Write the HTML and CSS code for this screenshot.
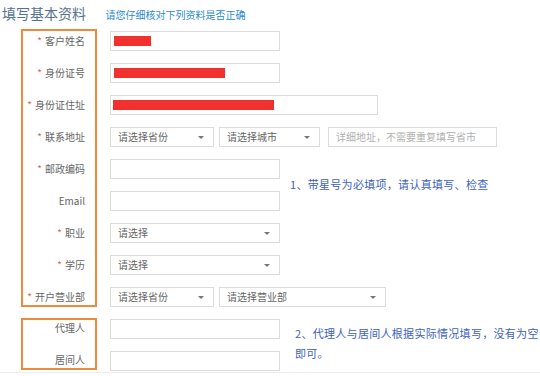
FILE: index.html
```html
<!DOCTYPE html>
<html>
<head>
    <title>填写基本资料</title>
    <link rel="stylesheet" href="styles.css">
</head>
<body>
    <div class="header">
        <span class="title">填写基本资料</span>
        <span class="subtitle">请您仔细核对下列资料是否正确</span>
    </div>

    <div class="form">
        <div class="labels">
            <div class="box box-main">
                <label class="lbl"><i>*</i>客户姓名</label>
                <label class="lbl"><i>*</i>身份证号</label>
                <label class="lbl"><i>*</i>身份证住址</label>
                <label class="lbl"><i>*</i>联系地址</label>
                <label class="lbl"><i>*</i>邮政编码</label>
                <label class="lbl">Email</label>
                <label class="lbl"><i>*</i>职业</label>
                <label class="lbl"><i>*</i>学历</label>
                <label class="lbl"><i>*</i>开户营业部</label>
            </div>
            <div class="box box-extra">
                <label class="lbl">代理人</label>
                <label class="lbl">居间人</label>
            </div>
        </div>

        <div class="fields">
            <div class="row">
                <div class="field w170"><span class="redact r1"></span></div>
            </div>
            <div class="row">
                <div class="field w170"><span class="redact r2"></span></div>
            </div>
            <div class="row">
                <div class="field w268"><span class="redact r3"></span></div>
            </div>
            <div class="row">
                <div class="field select w104">请选择省份</div>
                <div class="field select w101">请选择城市</div>
                <div class="field w169 placeholder">详细地址，不需要重复填写省市</div>
            </div>
            <div class="row">
                <div class="field w170"></div>
                <p class="note note-1">1、带星号为必填项，请认真填写、检查</p>
            </div>
            <div class="row">
                <div class="field w170"></div>
            </div>
            <div class="row">
                <div class="field select w170">请选择</div>
            </div>
            <div class="row">
                <div class="field select w170">请选择</div>
            </div>
            <div class="row">
                <div class="field select w104">请选择省份</div>
                <div class="field select w167">请选择营业部</div>
            </div>
            <div class="row">
                <div class="field w170"></div>
                <p class="note note-2">2、代理人与居间人根据实际情况填写，没有为空即可。</p>
            </div>
            <div class="row">
                <div class="field w170"></div>
            </div>
        </div>
    </div>
</body>
</html>
```

FILE: styles.css
```css
body {
    margin: 0;
    width: 540px;
    height: 376px;
    overflow: hidden;
    background: #fff;
    font-family: "Noto Sans CJK SC", "Liberation Sans", sans-serif;
    color: #555;
}
.header {
    height: 25px;
    line-height: 25px;
    padding-left: 2px;
    white-space: nowrap;
}
.title {
    font-size: 14px;
    color: #56728f;
}
.subtitle {
    margin-left: 16px;
    font-size: 10px;
    color: #2a8ad0;
}
.form {
    display: flex;
    margin-top: 6px;
    padding-bottom: 1px;
    border-bottom: 1px solid #ececec;
}
.labels {
    width: 76px;
    margin-left: 21px;
}
.box {
    display: flex;
    flex-direction: column;
    gap: 12px;
    border: 2px solid #ee8a3c;
    box-sizing: border-box;
}
.box-main {
    height: 278px;
    margin-top: -2px;
}
.box-extra {
    height: 52px;
    margin-top: 11px;
}
.lbl {
    flex: none;
    height: 20px;
    text-align: right;
    padding-right: 10px;
    font-size: 10px;
    line-height: 20px;
    color: #666;
    white-space: nowrap;
}
.box-extra .lbl {
    position: relative;
    top: -2px;
}
.lbl i {
    font-style: normal;
    color: #ec5a55;
    margin-right: 3px;
}
.fields {
    display: flex;
    flex-direction: column;
    gap: 12px;
    margin-left: 13px;
}
.row {
    display: flex;
    gap: 5px;
    height: 20px;
}
.field {
    flex: none;
    height: 20px;
    box-sizing: border-box;
    border: 1px solid #dcdcdc;
    background: #fff;
    padding-left: 7px;
    font-size: 10px;
    line-height: 18px;
    color: #666;
    white-space: nowrap;
    overflow: hidden;
    position: relative;
}
.select::after {
    content: "";
    position: absolute;
    right: 9px;
    top: 8px;
    border-left: 3px solid transparent;
    border-right: 3px solid transparent;
    border-top: 3px solid #777;
}
.placeholder {
    color: #b0b0b0;
    margin-left: 3px;
}
.w104 { width: 104px; }
.w101 { width: 101px; }
.w169 { width: 169px; }
.w167 { width: 167px; }
.w170 { width: 170px; }
.w268 { width: 268px; }
.redact {
    display: inline-block;
    height: 10px;
    margin-top: 4px;
    background: #f2302e;
    vertical-align: top;
}
.r1 { width: 37px; margin-left: -4px; }
.r2 { width: 111px; margin-left: -4px; }
.r3 { width: 161px; margin-left: -5px; }
.note {
    flex: none;
    margin: 0;
    font-size: 11px;
    line-height: 20px;
    letter-spacing: 0.3px;
    color: #3d5fc4;
}
.note-1 {
    margin: 15px 0 0 5px;
    white-space: nowrap;
}
.note-2 {
    margin: 4px 0 0 10px;
    width: 245px;
}
```
